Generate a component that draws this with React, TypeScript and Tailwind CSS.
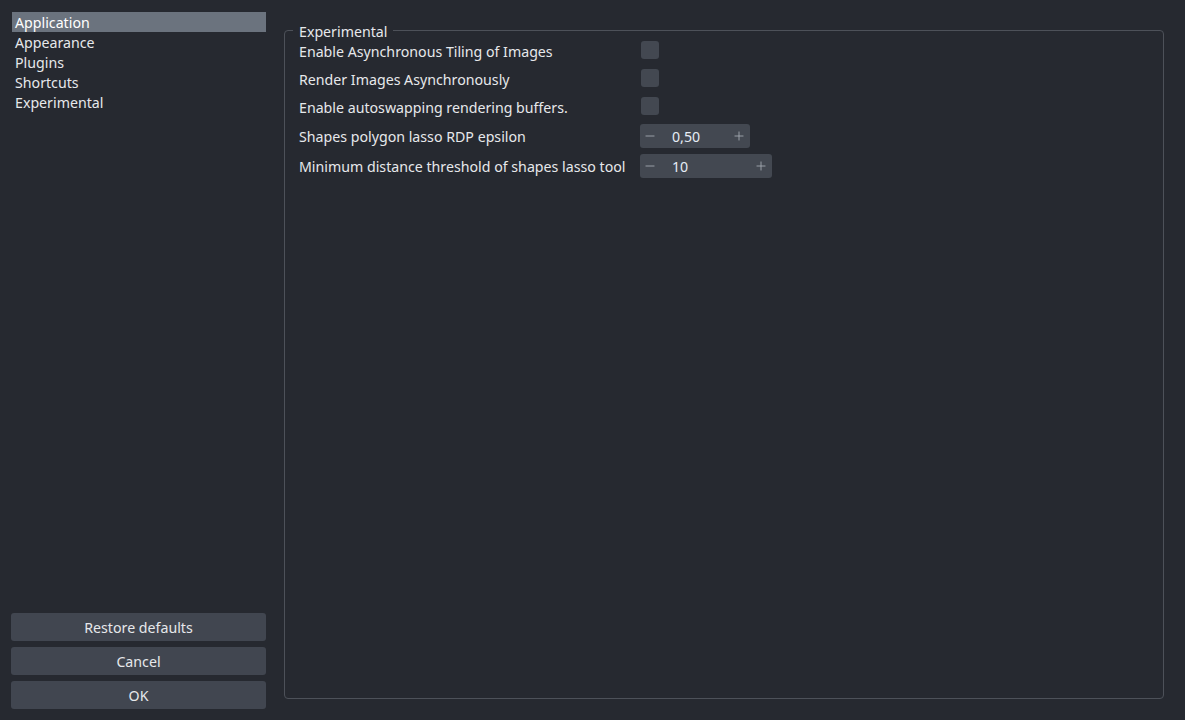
import { Minus, Plus } from 'lucide-react';

const pages = ['Application', 'Appearance', 'Plugins', 'Shortcuts', 'Experimental'];

function Checkbox() {
  return <div className="w-[18px] h-[18px] rounded-[3px] bg-[#434851]" />;
}

function SpinBox({ value, width }: { value: string; width: string }) {
  return (
    <div className={`${width} h-[24px] rounded-[3px] bg-[#434851] flex items-center pl-[3px] pr-[4px]`}>
      <Minus size={14} strokeWidth={1.5} className="text-[#a6abb3]" />
      <span className="ml-[15px] flex-1 pt-[2px] text-[#e6ecf5]">{value}</span>
      <Plus size={14} strokeWidth={1.5} className="text-[#a6abb3]" />
    </div>
  );
}

export default function App() {
  return (
    <div
      className="w-[1185px] h-[720px] bg-[#262930] text-[#e6e8eb] text-[14.2px] flex overflow-hidden whitespace-nowrap"
      style={{ fontFamily: '"Noto Sans", "Open Sans", sans-serif' }}
    >
      {/* Sidebar */}
      <div className="w-[284px] shrink-0 flex flex-col pl-[11px] pr-[18px] pt-[12px] pb-[11px]">
        <div className="flex flex-col pl-[1px]">
          {pages.map((p, i) => (
            <div
              key={p}
              className={`h-[20px] pt-[2px] leading-[18px] pl-[3px] ${i === 0 ? 'bg-[#6b737e] text-white' : ''}`}
            >
              {p}
            </div>
          ))}
        </div>
        <div className="mt-auto flex flex-col gap-[6px]">
          {['Restore defaults', 'Cancel', 'OK'].map((b) => (
            <button
              key={b}
              className="h-[28px] pt-[2px] rounded-[3px] bg-[#414650] text-[#e6e8eb] text-center"
            >
              {b}
            </button>
          ))}
        </div>
      </div>

      {/* Group box */}
      <div className="flex-1 pt-[30px] pr-[21px] pb-[21px]">
        <fieldset className="relative h-full border border-[#4d5159] rounded-[4px] px-[14px] pt-[5px]">
          <legend className="absolute -top-[9px] left-[8px] px-[6px] bg-[#262930] leading-[20px]">
            Experimental
          </legend>
          <div className="grid grid-cols-[341px_auto] justify-start">
            <div className="h-[28px] pt-[3px] flex items-center">Enable Asynchronous Tiling of Images</div>
            <div className="h-[28px] flex items-center pl-[1px]"><Checkbox /></div>
            <div className="h-[28px] pt-[3px] flex items-center">Render Images Asynchronously</div>
            <div className="h-[28px] flex items-center pl-[1px]"><Checkbox /></div>
            <div className="h-[28px] pt-[3px] flex items-center">Enable autoswapping rendering buffers.</div>
            <div className="h-[28px] flex items-center pl-[1px]"><Checkbox /></div>
            <div className="h-[31px] pt-[3px] flex items-center">Shapes polygon lasso RDP epsilon</div>
            <div className="h-[31px] pt-[1px] flex items-center"><SpinBox value="0,50" width="w-[110px]" /></div>
            <div className="h-[30px] pt-[2px] flex items-center">Minimum distance threshold of shapes lasso tool</div>
            <div className="h-[30px] flex items-center"><SpinBox value="10" width="w-[132px]" /></div>
          </div>
        </fieldset>
      </div>
    </div>
  );
}
